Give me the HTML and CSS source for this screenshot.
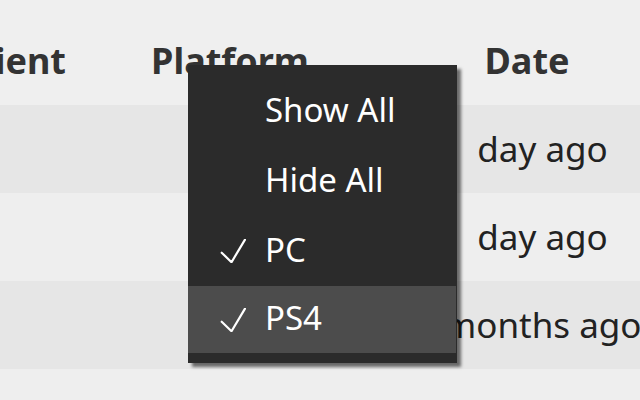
FILE: index.html
```html
<!DOCTYPE html>
<html>
<head>
<meta charset="utf-8">
<link rel="stylesheet" href="styles.css">
</head>
<body>
<div class="table">
  <div class="row head">
    <div class="cell c1">Recipient</div>
    <div class="cell c2">Platform</div>
    <div class="cell c3">Date</div>
  </div>
  <div class="row odd">
    <div class="cell c1"></div>
    <div class="cell c2"></div>
    <div class="cell c3 date"><span class="num">1</span> day ago</div>
  </div>
  <div class="row even">
    <div class="cell c1"></div>
    <div class="cell c2"></div>
    <div class="cell c3 date"><span class="num">1</span> day ago</div>
  </div>
  <div class="row odd">
    <div class="cell c1"></div>
    <div class="cell c2"></div>
    <div class="cell c3 date"><span class="num">2</span> months ago</div>
  </div>
  <div class="row even">
    <div class="cell c1"></div>
    <div class="cell c2 peek">Hb</div>
    <div class="cell c3 date"><span class="num">1</span> minute ago</div>
  </div>
</div>

<div class="menu">
  <div class="item"><span class="mark"></span><span class="label">Show All</span></div>
  <div class="item"><span class="mark"></span><span class="label">Hide All</span></div>
  <div class="item"><span class="mark"><svg width="26" height="24" viewBox="0 0 26 24"><path d="M1.7 13.7 L11.5 23.2 L25 0.6" fill="none" stroke="#fff" stroke-width="2.2" stroke-linecap="round" stroke-linejoin="round"/></svg></span><span class="label">PC</span></div>
  <div class="item active"><span class="mark"><svg width="26" height="24" viewBox="0 0 26 24"><path d="M1.7 13.7 L11.5 23.2 L25 0.6" fill="none" stroke="#fff" stroke-width="2.2" stroke-linecap="round" stroke-linejoin="round"/></svg></span><span class="label">PS4</span></div>
</div>
</body>
</html>
```

FILE: styles.css
```css
html, body {
  margin: 0;
  padding: 0;
  width: 640px;
  height: 400px;
  overflow: hidden;
  background: #efefef;
  font-family: "Noto Sans", "Open Sans", sans-serif;
}

.table {
  display: flex;
  flex-direction: column;
  width: 704px;
}

.row {
  display: grid;
  grid-template-columns: 110px 240px 354px;
  height: 88px;
  line-height: 88px;
  font-size: 35px;
  color: #222;
  white-space: nowrap;
}

.row.head {
  height: 89px;
  line-height: 89px;
  padding-top: 16px;
  font-size: 36px;
  font-weight: 700;
  color: #333;
  background: #efefef;
}

.row.odd { background: #e6e6e6; }
.row.even { background: #eeeeee; }

.cell {
  display: flex;
  justify-content: center;
  overflow: visible;
}

.c1 {
  justify-content: flex-end;
  padding-right: 44px;
}

.date {
  display: block;
  text-align: center;
  padding-right: 6px;
}

.num {
  margin-right: 8px;
}

.peek {
  justify-content: flex-start;
  padding-left: 62px;
}

.menu {
  position: absolute;
  left: 188px;
  top: 65px;
  width: 269px;
  height: 298px;
  box-sizing: border-box;
  padding-top: 11px;
  background: #2b2b2b;
  box-shadow: 4px 4px 3px rgba(0, 0, 0, 0.55);
  color: #fff;
  font-size: 33px;
}

.item {
  display: flex;
  align-items: center;
  height: 70px;
  padding-left: 32px;
}

.item.active {
  background: #4c4c4c;
  margin-right: 1px;
  height: 67px;
}

.mark {
  width: 26px;
  height: 24px;
  margin-right: 19px;
  display: flex;
}

.label {
  line-height: 1;
  padding-bottom: 4px;
}
```
